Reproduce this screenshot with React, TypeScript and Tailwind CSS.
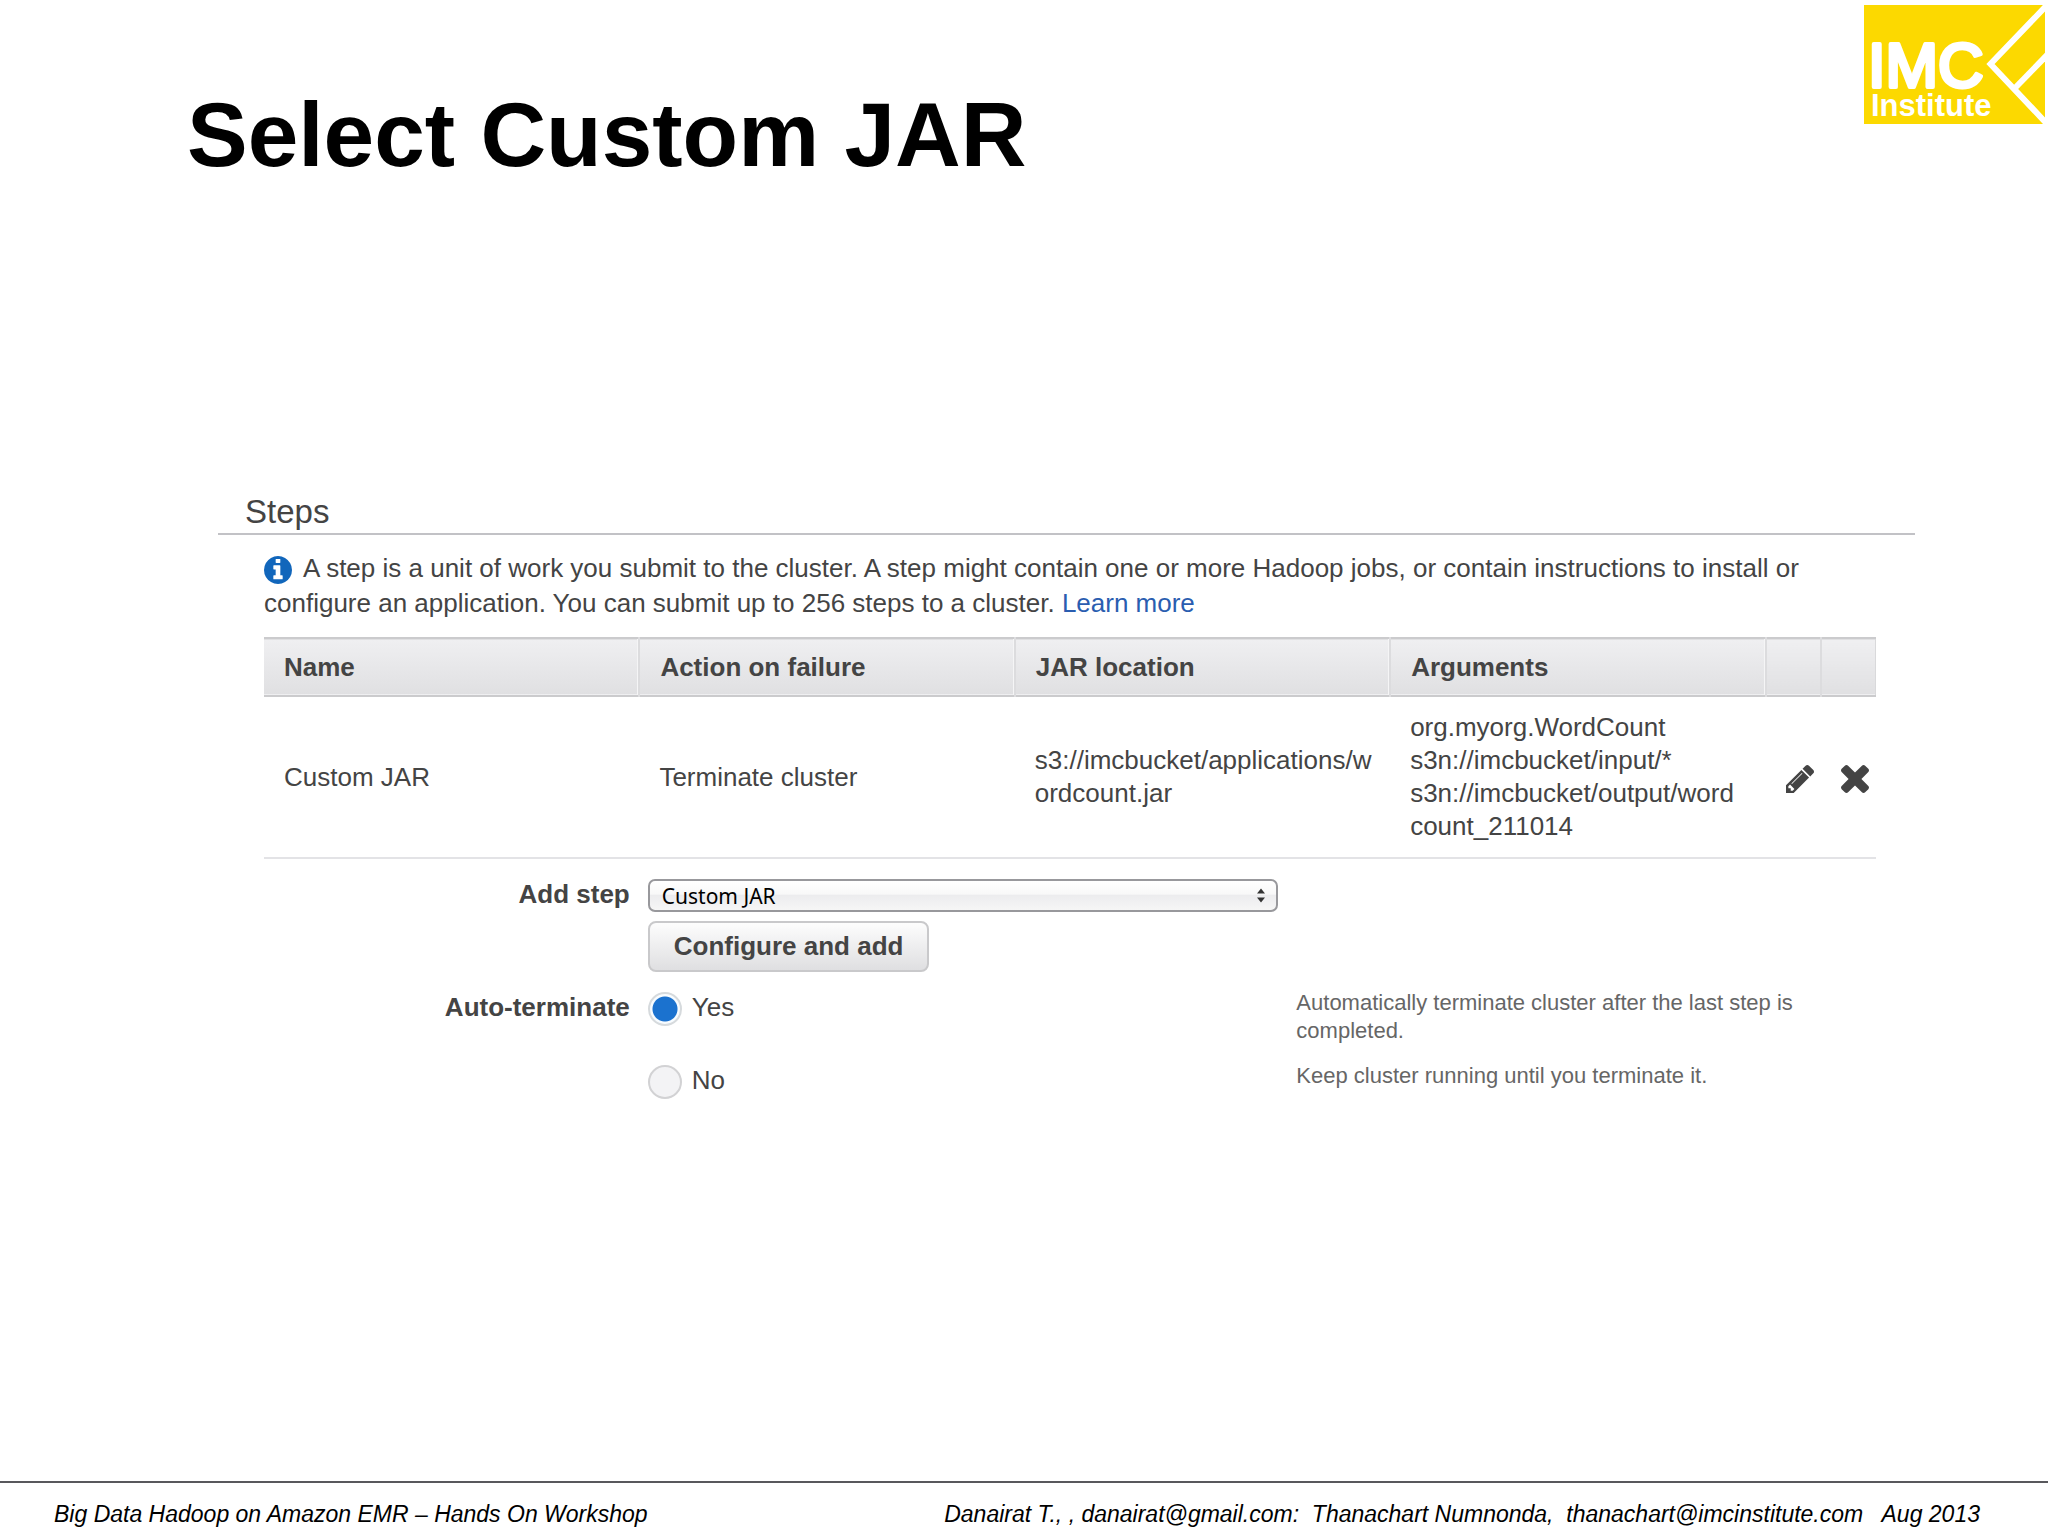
import { useState } from "react";

function Logo() {
  return (
    <svg
      viewBox="0 0 181 119"
      className="h-[119px] w-[181px] shrink-0"
      role="img"
      aria-label="IMC Institute"
    >
      <rect width="181" height="119" fill="#fcd900" />
      <g fill="none" stroke="#fff" strokeWidth="6">
        <path d="M185 -2 L126.500 59 L185 121" />
        <path d="M151 83 L185 48" />
      </g>
      <g fill="#fff" fontFamily="Liberation Sans, Arial, sans-serif">
        <text x="4" y="82" fontSize="63" stroke="#fff" strokeWidth="4" strokeLinejoin="round">
          IMC
        </text>
        <text x="7" y="111" fontSize="31" fontWeight="bold">
          Institute
        </text>
      </g>
    </svg>
  );
}

function InfoIcon() {
  return (
    <svg
      viewBox="128 128 1536 1536"
      className="mr-[11px] inline-block size-7 align-[-7px]"
      fill="#1166bb"
      aria-hidden="true"
    >
      <path d="M1152 1376v-160q0-14-9-23t-23-9h-96v-512q0-14-9-23t-23-9h-320q-14 0-23 9t-9 23v160q0 14 9 23t23 9h96v320h-96q-14 0-23 9t-9 23v160q0 14 9 23t23 9h448q14 0 23-9t9-23zm-128-896v-160q0-14-9-23t-23-9h-192q-14 0-23 9t-9 23v160q0 14 9 23t23 9h192q14 0 23-9t9-23zm640 416q0 209-103 385.5t-279.5 279.5-385.5 103-385.5-103-279.5-279.5-103-385.5 103-385.5 279.5-279.5 385.5-103 385.5 103 279.5 279.5 103 385.5z" />
    </svg>
  );
}

function PencilIcon() {
  return (
    <svg viewBox="128 149 1515 1515" className="size-7" fill="#444444" aria-hidden="true">
      <path d="M491 1536l91-91-235-235-91 91v107h128v128h107zM1014 608q0-22-22-22-10 0-17 7l-542 542q-7 7-7 17 0 22 22 22 10 0 17-7l542-542q7-7 7-17zM960 416l416 416-832 832h-416v-416zM1643 512q0 53-37 90l-166 166-416-416 166-165q36-38 90-38 53 0 91 38l235 234q37 39 37 91z" />
    </svg>
  );
}

function CrossIcon() {
  return (
    <svg viewBox="302 366 1188 1188" className="size-7" fill="#444444" aria-hidden="true">
      <path d="M1490 1322q0 40-28 68l-136 136q-28 28-68 28t-68-28l-294-294-294 294q-28 28-68 28t-68-28l-136-136q-28-28-28-68t28-68l294-294-294-294q-28-28-28-68t28-68l136-136q28-28 68-28t68 28l294 294 294-294q28-28 68-28t68 28l136 136q28 28 28 68t-28 68l-294 294 294 294q28 28 28 68z" />
    </svg>
  );
}

const HEADINGS = ["Name", "Action on failure", "JAR location", "Arguments"];

function StepsTable() {
  return (
    <table className="mt-4 w-full table-fixed border-collapse text-left">
      <colgroup>
        <col />
        <col />
        <col />
        <col />
        <col className="w-[55px]" />
        <col className="w-[55px]" />
      </colgroup>
      <thead>
        <tr className="h-[58px] border-y-2 border-[#cbcbcd] bg-linear-to-b from-[#efeff1] to-[#e0e0e2]">
          {HEADINGS.map((heading) => (
            <th
              key={heading}
              scope="col"
              className="border-r-2 border-r-[#dcdcde] px-5 font-bold shadow-[inset_-1px_0_0_#f5f5f6]"
            >
              {heading}
            </th>
          ))}
          <th scope="col" aria-label="Edit" className="border-r-2 border-r-[#dcdcde]" />
          <th scope="col" aria-label="Remove" className="border-r border-r-[#d9d9db]" />
        </tr>
      </thead>
      <tbody>
        <tr className="border-b-2 border-[#e3e3e6] leading-[33px]">
          <td className="px-5">Custom JAR</td>
          <td className="px-5">Terminate cluster</td>
          <td className="pr-2 pl-5 break-all">s3://imcbucket/applications/wordcount.jar</td>
          <td className="py-[14px] pr-7 pl-5 break-all">
            <p>org.myorg.WordCount</p>
            <p>s3n://imcbucket/input/*</p>
            <p>s3n://imcbucket/output/wordcount_211014</p>
          </td>
          <td className="pt-1 pl-5">
            <button type="button" aria-label="Edit step" className="block">
              <PencilIcon />
            </button>
          </td>
          <td className="pt-1 pl-5">
            <button type="button" aria-label="Remove step" className="block">
              <CrossIcon />
            </button>
          </td>
        </tr>
      </tbody>
    </table>
  );
}

const RADIO =
  "size-[34px] shrink-0 appearance-none rounded-full border-2 border-[#d2d2d4] bg-[#f3f3f5] checked:border-[#d6dadd] checked:bg-[radial-gradient(circle,#1b72cf_0_12px,#f8fcff_13px)]";

function StepForm() {
  const [step, setStep] = useState("Custom JAR");
  const [autoTerminate, setAutoTerminate] = useState(true);

  return (
    <form className="mt-5 grid grid-cols-[366fr_631fr_580fr] gap-x-[18px]">
      <label htmlFor="step" className="text-right leading-[30px] font-bold">
        Add step
      </label>
      <div>
        <div className="relative">
          <select
            id="step"
            value={step}
            onChange={(event) => setStep(event.target.value)}
            className="block h-[33px] w-full appearance-none rounded-[7px] border-2 border-[#98989c] bg-[linear-gradient(#ffffff_0%,#f8f8f8_45%,#ececee_50%,#f6f6f6_100%)] pl-3 font-['Noto_Sans',sans-serif] text-[21px] leading-[28px] text-black"
          >
            <option>Custom JAR</option>
            <option>Hive program</option>
            <option>Streaming program</option>
          </select>
          <svg
            viewBox="0 0 8 14"
            className="pointer-events-none absolute top-[9px] right-[13px] h-[15px] w-2"
            fill="#333333"
            aria-hidden="true"
          >
            <path d="M4 0L8 5H0zM4 14L8 9H0z" />
          </svg>
        </div>
        <button
          type="button"
          className="mt-[9px] h-[51px] rounded-[8px] border-2 border-[#c9c9cb] bg-linear-to-b from-[#fdfdfd] to-[#dfdfe1] px-6 font-bold"
        >
          Configure and add
        </button>
      </div>
      <div />

      <div className="mt-5 text-right leading-[30px] font-bold">Auto-terminate</div>
      <div className="mt-5 flex items-start gap-[10px]">
        <input
          id="terminate-yes"
          type="radio"
          name="terminate"
          checked={autoTerminate}
          onChange={() => setAutoTerminate(true)}
          className={RADIO}
        />
        <label htmlFor="terminate-yes" className="leading-[30px]">
          Yes
        </label>
      </div>
      <p className="mt-[17px] text-[22px] leading-[28px] text-[#666666]">
        Automatically terminate cluster after the last step is completed.
      </p>

      <div />
      <div className="mt-5 flex items-start gap-[10px]">
        <input
          id="terminate-no"
          type="radio"
          name="terminate"
          checked={!autoTerminate}
          onChange={() => setAutoTerminate(false)}
          className={RADIO}
        />
        <label htmlFor="terminate-no" className="leading-[30px]">
          No
        </label>
      </div>
      <p className="mt-[17px] text-[22px] leading-[28px] text-[#666666]">
        Keep cluster running until you terminate it.
      </p>
    </form>
  );
}

export default function App() {
  return (
    <div className="flex min-h-screen flex-col bg-white font-['Liberation_Sans',Arial,sans-serif] text-black">
      <header className="flex items-start justify-between pt-[5px] pr-[3px] pl-[187px]">
        <h1 className="mt-[78px] text-[91px] leading-[104px] font-bold">Select Custom JAR</h1>
        <Logo />
      </header>

      <main className="mt-[304px] mr-[133px] ml-[218px] flex-1 text-[26px] text-[#444444]">
        <h2 className="border-b-2 border-[#c2c2c6] pl-[27px] text-[33px] leading-[42px]">Steps</h2>
        <section className="mr-[39px] ml-[46px] pt-4">
          <p className="leading-[35px]">
            <InfoIcon />A step is a unit of work you submit to the cluster. A step might contain one or
            more Hadoop jobs, or contain instructions to install or configure an application. You can
            submit up to 256 steps to a cluster.{" "}
            <a href="#learn-more" className="text-[#2a5db0]">
              Learn more
            </a>
          </p>
          <StepsTable />
          <StepForm />
        </section>
      </main>

      <footer className="flex h-[55px] items-center justify-between border-t-2 border-[#58585c] pt-[10px] pr-[68px] pl-[54px] text-[23px] italic">
        <p>Big Data Hadoop on Amazon EMR – Hands On Workshop</p>
        <p className="whitespace-pre">
          {"Danairat T., , danairat@gmail.com:  Thanachart Numnonda,  thanachart@imcinstitute.com   Aug 2013"}
        </p>
      </footer>
    </div>
  );
}
